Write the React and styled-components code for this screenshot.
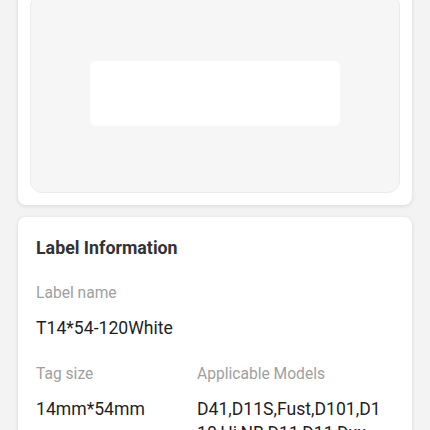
import React from 'react'
import styled, { createGlobalStyle } from 'styled-components'

const GlobalStyle = createGlobalStyle`
  html, body {
    margin: 0;
    padding: 0;
    background: #f3f3f3;
    font-family: Roboto, "Noto Sans", "Liberation Sans", sans-serif;
  }
`

const Page = styled.div`
  display: flex;
  flex-direction: column;
  gap: 12px;
  padding: 0 18px 18px;
  margin-top: -18px;
`

const Card = styled.div`
  background: #ffffff;
  border-radius: 8px;
  box-shadow: 0 1px 4px rgba(0, 0, 0, 0.12);
  padding: ${(p) => p.pad || '12px'};
`

const Preview = styled.div`
  height: 197px;
  display: flex;
  align-items: center;
  justify-content: center;
  background: #f6f6f6;
  border: 1px solid #ebebeb;
  border-radius: 12px;
`

const LabelBlank = styled.div`
  width: 250px;
  height: 65px;
  background: #ffffff;
  border-radius: 6px;
`

const Title = styled.div`
  font-size: 17.8px;
  font-weight: 700;
  color: #333333;
  margin-bottom: 25px;
`

const Grid = styled.div`
  display: grid;
  grid-template-columns: 161px 190px;
  row-gap: 24px;
`

const Field = styled.div`
  grid-column: ${(p) => (p.wide ? '1 / 3' : 'auto')};
  display: flex;
  flex-direction: column;
  gap: 13px;
`

const Key = styled.div`
  font-size: 15.6px;
  color: #a0a0a0;
  line-height: 20px;
`

const Value = styled.div`
  font-size: 17.6px;
  color: #1f1f1f;
  line-height: 24px;
  word-break: break-all;
`

export default function App() {
  return (
    <>
      <GlobalStyle />
      <Page>
        <Card>
          <Preview>
            <LabelBlank />
          </Preview>
        </Card>
        <Card pad="20px 18px 18px">
          <Title>Label Information</Title>
          <Grid>
            <Field wide>
              <Key>Label name</Key>
              <Value>T14*54-120White</Value>
            </Field>
            <Field>
              <Key>Tag size</Key>
              <Value>14mm*54mm</Value>
            </Field>
            <Field>
              <Key>Applicable Models</Key>
              <Value>D41,D11S,Fust,D101,D110,Hi,NB,D11,D11,Dxx</Value>
            </Field>
          </Grid>
        </Card>
      </Page>
    </>
  )
}
